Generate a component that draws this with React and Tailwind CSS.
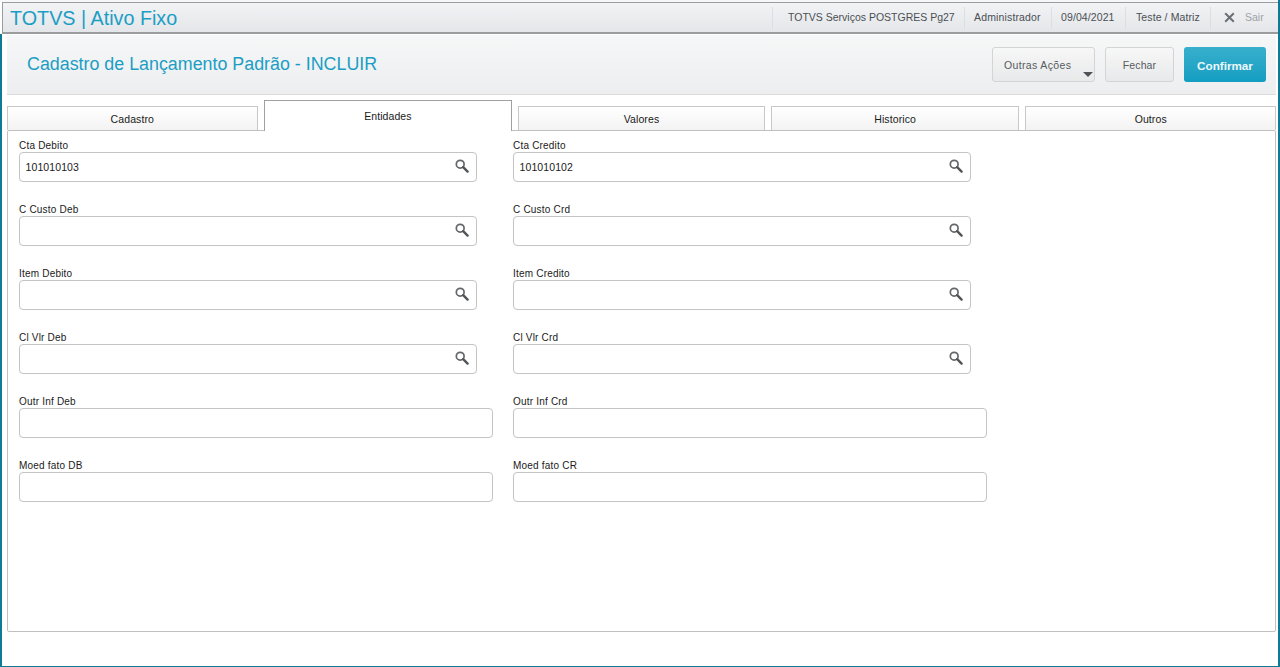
import React from "react";

function SearchIcon() {
  return (
    <svg width="14" height="14" viewBox="0 0 14 14" className="shrink-0 -mt-[2px]">
      <circle cx="5.2" cy="5.2" r="3.9" fill="none" stroke="#62676b" strokeWidth="1.7" />
      <path d="M8.2 8.2 L12.6 12.6" stroke="#505559" strokeWidth="2.4" strokeLinecap="round" />
    </svg>
  );
}

function Field({ label, value, search, wide }) {
  return (
    <div className={`${wide ? "w-[474px]" : "w-[458px]"} h-[50px] flex flex-col`}>
      <div className="h-[20px] pt-[6px] text-[10px] leading-[15px] text-[#1a1a1a] tracking-[0.2px]">{label}</div>
      <div className="h-[30px] border border-[#c4c4c4] rounded-[4px] bg-white flex items-center justify-between pl-[5.5px] pr-[7px]">
        <span className="text-[10.5px] pt-[1px] text-[#1a1a1a] tracking-[0.1px]">{value}</span>
        {search && <SearchIcon />}
      </div>
    </div>
  );
}

function Tab({ label, active, w }) {
  if (active)
    return (
      <div className={`${w} h-[31px] -mb-px relative z-10 border border-b-0 border-[#a0a0a0] bg-white flex items-center justify-center pt-[1px] text-[10.5px] tracking-[0.05px] text-[#1a1a1a]`}>
        {label}
      </div>
    );
  return (
    <div className={`${w} h-[24px] border border-b-0 border-[#c8c8c8] bg-gradient-to-b from-white to-[#f3f3f3] flex items-center justify-center pt-[3px] text-[10.5px] tracking-[0.1px] text-[#1a1a1a]`}>
      {label}
    </div>
  );
}

const rows = [
  ["Cta Debito", "Cta Credito", "101010103", "101010102", true],
  ["C Custo Deb", "C Custo Crd", "", "", true],
  ["Item Debito", "Item Credito", "", "", true],
  ["Cl Vlr Deb", "Cl Vlr Crd", "", "", true],
  ["Outr Inf Deb", "Outr Inf Crd", "", "", false],
  ["Moed fato DB", "Moed fato CR", "", "", false],
];

function Sep({ children, className = "" }) {
  return (
    <div className={`h-[22px] border-l border-[#dcdfe2] flex items-center text-[10.5px] text-[#4a4f53] ${className}`}>
      {children}
    </div>
  );
}

export default function App() {
  return (
    <div className="w-[1280px] h-[667px] bg-white overflow-hidden flex flex-col border-r-2 border-[#0f7a94] font-['Liberation_Sans',Arial,sans-serif]">
      <div className="h-[2px] shrink-0 bg-[#f6f7f8]" />
      <div className="h-[32px] ml-[2px] border-l border-t border-b-2 border-[#9a9c9e] bg-gradient-to-b from-[#f2f3f5] to-[#e4e6e9] flex items-center justify-between shrink-0">
        <div className="pl-[7px] text-[19.75px] leading-[28px] text-[#1b9ec4] whitespace-nowrap">TOTVS | Ativo Fixo</div>
        <div className="flex items-center">
          <Sep className="w-[192px] pl-[15px]">TOTVS Serviços POSTGRES Pg27</Sep>
          <Sep className="w-[87px] pl-[9px] tracking-[0.15px]">Administrador</Sep>
          <Sep className="w-[74px] pl-[9px] tracking-[0.1px]">09/04/2021</Sep>
          <Sep className="w-[85px] pl-[10px] tracking-[0.1px]">Teste / Matriz</Sep>
          <Sep className="w-[68px] pl-[13px] gap-[10px]">
            <svg width="11" height="11" viewBox="0 0 11 11"><path d="M1.2 1.2 L9.8 9.8 M9.8 1.2 L1.2 9.8" stroke="#6b7074" strokeWidth="2" /></svg>
            <span className="text-[#9ea2a5]">Sair</span>
          </Sep>
        </div>
      </div>
      <div className="flex-1 min-h-0 border-l-2 border-b border-[#0f7a94] flex flex-col pl-[5px] pr-[2px]">
        <div className="h-[60px] mt-[1px] shrink-0 bg-gradient-to-b from-[#f6f7f7] to-[#eceef0] border-b border-[#dcdcdc] flex items-center justify-between pl-[20px] pr-[10px]">
          <div className="text-[17.85px] leading-[26px] text-[#1b9ec4] pb-[1px]">Cadastro de Lançamento Padrão - INCLUIR</div>
          <div className="flex items-center gap-[10px] pb-[1px]">
            <div className="relative w-[103px] h-[35px] rounded-[3px] border border-[#d4d4d4] bg-gradient-to-b from-[#f7f7f7] to-[#e8e9ea] flex items-center pl-[11px] pt-[3px] text-[10.5px] text-[#555a5e] tracking-[0.35px]">
              Outras Ações
              <div className="absolute right-[1px] bottom-[4px] w-0 h-0 border-l-[5px] border-r-[5px] border-t-[5px] border-l-transparent border-r-transparent border-t-[#4e5357]" />
            </div>
            <div className="w-[69px] h-[35px] rounded-[3px] border border-[#d4d4d4] bg-gradient-to-b from-[#f7f7f7] to-[#e8e9ea] flex items-center justify-center pt-[3px] text-[10.5px] tracking-[0.1px] text-[#555a5e]">Fechar</div>
            <div className="w-[82px] h-[35px] rounded-[3px] bg-gradient-to-b from-[#37afcd] to-[#119ec1] flex items-center justify-center pt-[3px] text-[11.7px] font-bold text-[#eef8fb]">Confirmar</div>
          </div>
        </div>
        <div className="h-[35px] shrink-0 flex items-end gap-[6px]">
          <Tab label="Cadastro" w="w-[251px]" />
          <Tab label="Entidades" active w="w-[249px]" />
          <Tab label="Valores" w="w-[247px]" />
          <Tab label="Historico" w="w-[249px]" />
          <Tab label="Outros" w="w-[251px]" />
        </div>
        <div className="h-[502px] w-[1269px] shrink-0 border border-[#c0c0c0] rounded-[2px] pl-[11px] pt-[1px] flex flex-col gap-[14px]">
          {rows.map((r) => (
            <div key={r[0]} className="flex gap-[20px] shrink-0">
              <div className={r[4] ? "w-[474px]" : ""}>
                <Field label={r[0]} value={r[2]} search={r[4]} wide={!r[4]} />
              </div>
              <Field label={r[1]} value={r[3]} search={r[4]} wide={!r[4]} />
            </div>
          ))}
        </div>
      </div>
    </div>
  );
}
